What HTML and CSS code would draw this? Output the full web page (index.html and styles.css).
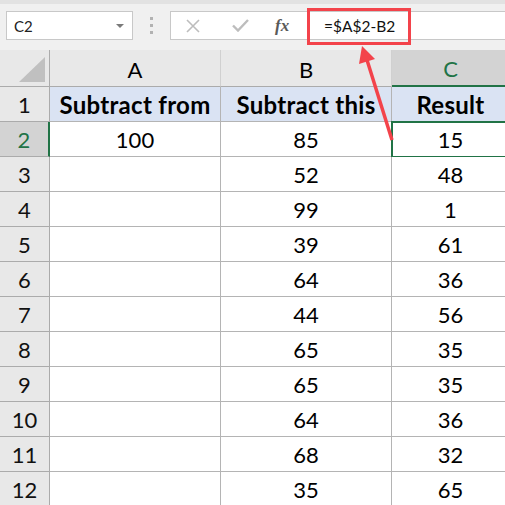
FILE: index.html
```html
<!DOCTYPE html>
<html>
<head>
<meta charset="utf-8">
<link rel="stylesheet" href="styles.css">
</head>
<body>
<div class="app">
  <div class="toolbar">
    <div class="namebox"><span class="nb-text">C2</span><span class="caret"></span></div>
    <div class="grip"><i></i><i></i><i></i></div>
    <div class="fbar">
      <div class="fbtns">
        <svg class="ico-x" width="14" height="14" viewBox="0 0 14 14"><path d="M1 1 L13 13 M13 1 L1 13" stroke="#bdbdbd" stroke-width="1.6" fill="none"/></svg>
        <svg class="ico-ok" width="17" height="13" viewBox="0 0 17 13"><path d="M1 6.5 L6 11.5 L16 1" stroke="#bdbdbd" stroke-width="2.4" fill="none"/></svg>
        <span class="fx">fx</span>
      </div>
      <div class="finput"><span class="ftext">=$A$2-B2</span></div>
    </div>
  </div>
  <div class="sheet">
    <div class="corner"><span class="tri"></span></div>
    <div class="ch">A</div>
    <div class="ch">B</div>
    <div class="ch ch-sel">C</div>

    <div class="rh">1</div>
    <div class="c hd">Subtract from</div>
    <div class="c hd">Subtract this</div>
    <div class="c hd">Result</div>

    <div class="rh rh-sel">2</div><div class="c">100</div><div class="c">85</div><div class="c sel">15</div>
    <div class="rh">3</div><div class="c"></div><div class="c">52</div><div class="c">48</div>
    <div class="rh">4</div><div class="c"></div><div class="c">99</div><div class="c">1</div>
    <div class="rh">5</div><div class="c"></div><div class="c">39</div><div class="c">61</div>
    <div class="rh">6</div><div class="c"></div><div class="c">64</div><div class="c">36</div>
    <div class="rh">7</div><div class="c"></div><div class="c">44</div><div class="c">56</div>
    <div class="rh">8</div><div class="c"></div><div class="c">65</div><div class="c">35</div>
    <div class="rh">9</div><div class="c"></div><div class="c">65</div><div class="c">35</div>
    <div class="rh">10</div><div class="c"></div><div class="c">64</div><div class="c">36</div>
    <div class="rh">11</div><div class="c"></div><div class="c">68</div><div class="c">32</div>
    <div class="rh">12</div><div class="c"></div><div class="c">35</div><div class="c">65</div>
  </div>
  <div class="callout"></div>
  <svg class="arrow" width="505" height="505" viewBox="0 0 505 505">
    <line x1="392" y1="140" x2="367" y2="60" stroke="#f3434b" stroke-width="3.5"/>
    <polygon points="362,46 375,59 359,64" fill="#f3434b"/>
  </svg>
</div>
</body>
</html>
```

FILE: styles.css
```css
* { box-sizing: border-box; }
html, body { margin: 0; padding: 0; }
body {
  width: 505px;
  height: 505px;
  overflow: hidden;
  background: #ffffff;
  font-family: Lato, "Liberation Sans", sans-serif;
}
.app { position: relative; width: 505px; height: 505px; overflow: hidden; }

.toolbar {
  height: 50px;
  background: #f0f0f0;
  border-top: 4px solid #e2e2e2;
  display: flex;
  align-items: flex-start;
  padding: 7px 0 0 6px;
}
.namebox {
  width: 127px;
  height: 29px;
  background: #fff;
  border: 1px solid #c8c8c8;
  display: flex;
  align-items: center;
  justify-content: space-between;
  padding: 0 8px 0 7px;
}
.nb-text { font-size: 15px; color: #222; }
.caret {
  width: 0; height: 0;
  border-left: 4px solid transparent;
  border-right: 4px solid transparent;
  border-top: 4px solid #7a7a7a;
}
.grip {
  width: 37px;
  height: 29px;
  display: flex;
  flex-direction: column;
  align-items: center;
  justify-content: center;
  gap: 4px;
}
.grip i { display: block; width: 3px; height: 3px; background: #b2b2b2; }
.fbar {
  flex: 1;
  height: 29px;
  background: #fff;
  border: 1px solid #c8c8c8;
  border-right: none;
  display: flex;
  align-items: center;
}
.fbtns {
  width: 136px;
  height: 100%;
  display: flex;
  align-items: center;
  padding-left: 15px;
}
.ico-ok { margin-left: 32px; }
.fx {
  margin-left: 26px;
  font-family: "Liberation Serif", serif;
  font-style: italic;
  font-weight: bold;
  font-size: 17px;
  color: #5a5a5a;
}
.finput { flex: 1; padding-left: 17px; }
.ftext { font-size: 15.5px; color: #111; }

.sheet {
  display: grid;
  grid-template-columns: 50px 171px 171px 118px;
  grid-template-rows: 37px repeat(12, 35px);
  font-size: 22px;
  color: #000;
}
.corner {
  background: #e8e8e8;
  border-right: 1px solid #ababab;
  border-bottom: 1px solid #ababab;
  position: relative;
}
.tri {
  position: absolute;
  right: 4px;
  bottom: 4px;
  width: 0; height: 0;
  border-left: 26px solid transparent;
  border-bottom: 25px solid #c0c0c0;
}
.ch {
  background: #e8e8e8;
  border-right: 1px solid #d0d0d0;
  border-bottom: 1px solid #ababab;
  display: flex;
  align-items: center;
  justify-content: center;
  padding-top: 2px;
}
.ch-sel {
  background: #d3d3d3;
  color: #217346;
  border-bottom: 2px solid #217346;
}
.rh {
  background: #e8e8e8;
  border-right: 1px solid #ababab;
  border-bottom: 1px solid #ababab;
  display: flex;
  align-items: center;
  justify-content: center;
  color: #111;
}
.rh-sel {
  background: #d3d3d3;
  color: #217346;
  border-right: 2px solid #217346;
}
.c {
  background: #fff;
  border-right: 1px solid #b4b4b4;
  border-bottom: 1px solid #b4b4b4;
  display: flex;
  align-items: center;
  justify-content: center;
}
.c.hd {
  background: #dae3f3;
  font-weight: bold;
  font-size: 24px;
  letter-spacing: 0.3px;
  padding-top: 1px;
}
.c.sel { outline: 2px solid #217346; outline-offset: -1px; }

.callout {
  position: absolute;
  left: 307px;
  top: 8px;
  width: 104px;
  height: 37px;
  border: 3px solid #f3434b;
}
.arrow { position: absolute; left: 0; top: 0; pointer-events: none; }
```
